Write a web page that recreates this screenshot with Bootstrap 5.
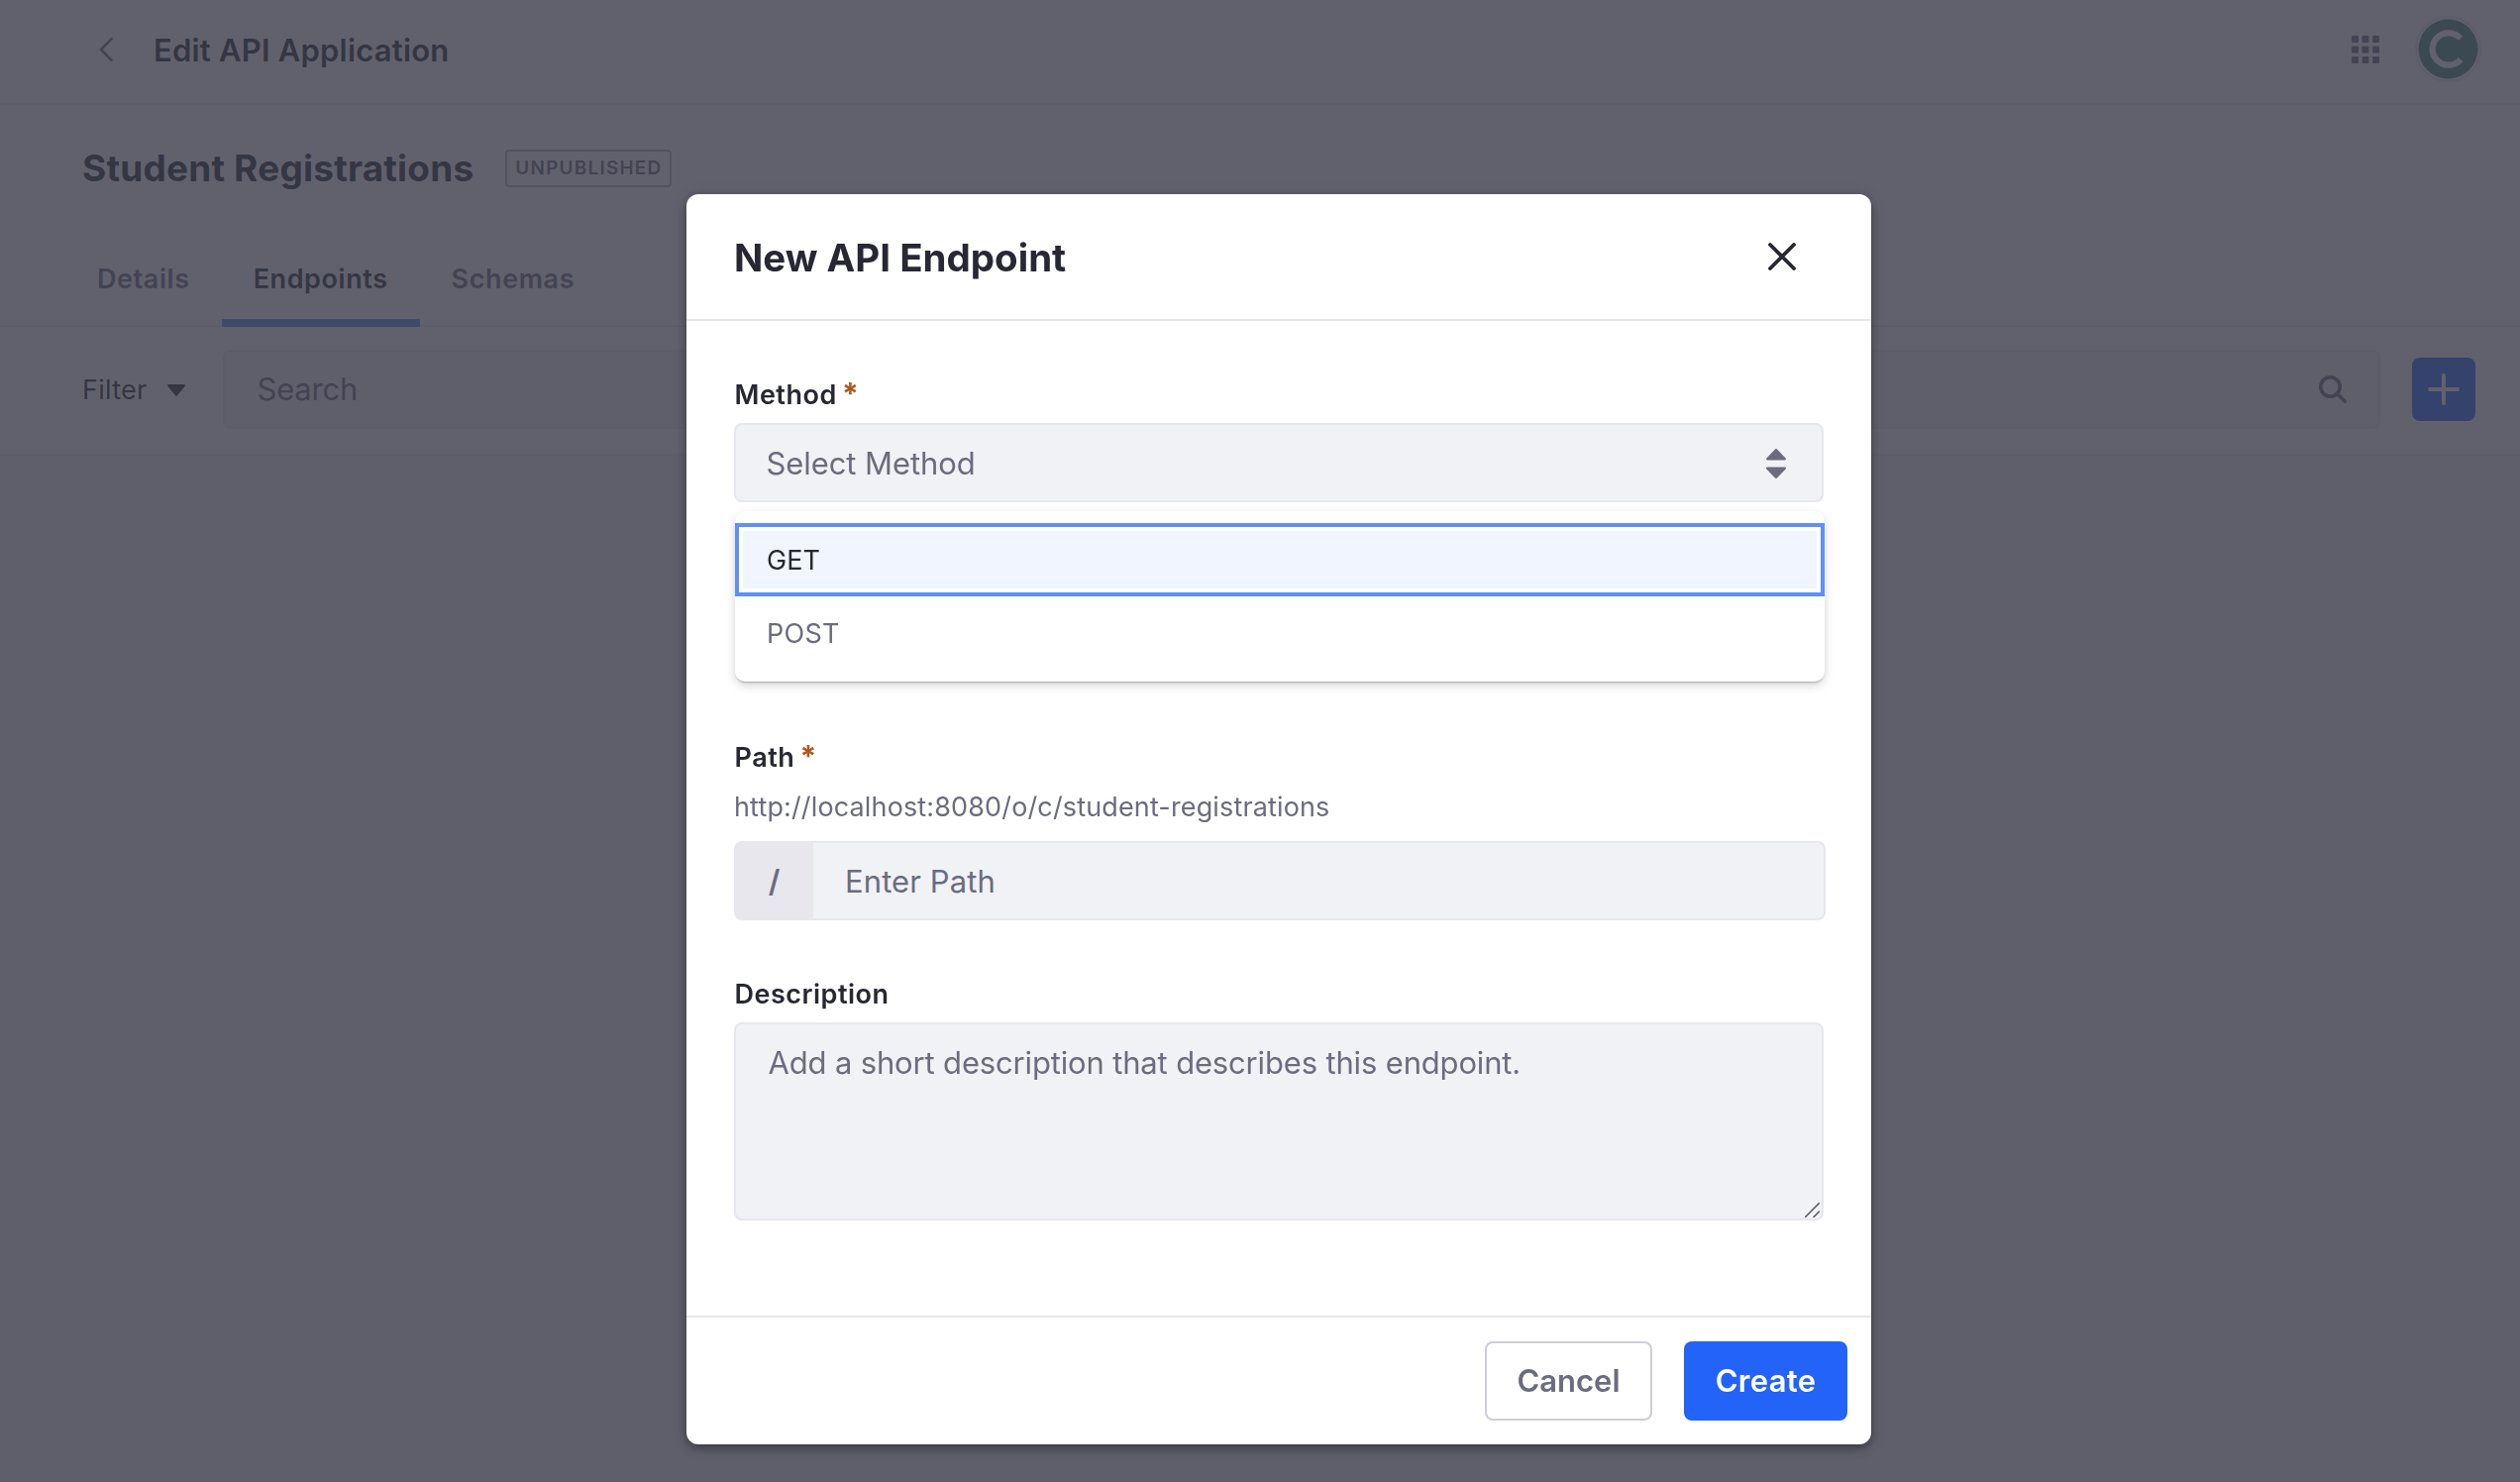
<!DOCTYPE html>
<html lang="en">
<head>
<meta charset="utf-8">
<meta name="viewport" content="width=device-width, initial-scale=1">
<title>Edit API Application</title>
<link href="https://cdn.jsdelivr.net/npm/bootstrap@5.3.0/dist/css/bootstrap.min.css" rel="stylesheet">
<style>
  :root { --ink: #272833; --muted: #6b6c7e; --line: #e7e7ed; --field: #f1f2f5; --blue: #2463f7; }
  body { font-family: Inter, "Liberation Sans", sans-serif; font-size: 27px; line-height: 40px; color: var(--ink); background: var(--field); height: 1496px; overflow: hidden; }
  svg { display: block; flex: none; }

  /* application page */
  .app-bar { height: 106px; padding: 0 39px 4px 100px; border-bottom: 2px solid var(--line); }
  .app-title { font-size: 31px; font-weight: 600; letter-spacing: .2px; margin-left: 40px; padding-top: 1px; }
  .avatar-ring { width: 67px; height: 67px; margin-left: 36px; margin-top: -2px; }
  .heading-bar { height: 128px; padding-left: 83px; }
  .heading-bar h1 { font-size: 37px; font-weight: 700; line-height: 48px; letter-spacing: .2px; }
  .status-tag { width: 168px; height: 38px; margin-left: 32px; padding-left: 8px; font-size: 19px; line-height: 34px; font-weight: 600; letter-spacing: 1.2px; color: var(--muted); border: 2px solid #b4b5c3; border-radius: 4px; }
  .tab-bar { height: 96px; padding-left: 66px; border-bottom: 2px solid var(--line); }
  .tab-bar .nav-link { height: 96px; padding: 28px 32px 0; font-weight: 600; letter-spacing: .58px; color: var(--muted); border-bottom: 8px solid transparent; }
  .tab-bar .nav-link.active { color: var(--ink); border-bottom-color: #5393f0; }
  .tool-bar { height: 130px; padding: 0 45px 2px 83px; border-bottom: 2px solid var(--line); }
  .filter-toggle { width: 142px; letter-spacing: .26px; padding-top: 1px; }
  .filter-toggle svg { margin-left: 21px; }
  .search-box { height: 80px; background: var(--field); border: 2px solid var(--line); border-radius: 8px; padding: 0 32px 0 32.5px; font-size: 31px; letter-spacing: -.21px; color: var(--muted); }
  .add-btn { width: 64px; height: 64px; margin-left: 32px; border-radius: 8px; background: var(--blue); }

  /* modal */
  .modal-backdrop { --bs-backdrop-bg: #3a3a49; --bs-backdrop-opacity: .8; }
  .modal-dialog { width: 1196px; max-width: none; margin: 196px 0 0 693px; }
  .modal-content { height: 1262px; border: 0; border-radius: 12px; color: var(--ink); box-shadow: 0 2px 10px -2px rgba(0,0,0,.3), 0 6px 10px 0 rgba(0,0,0,.16), 0 2px 16px 0 rgba(0,0,0,.12); }
  .modal-header { height: 128px; padding: 2px 76px 0 48px; border-bottom: 2px solid var(--line); }
  .modal-header svg { margin-top: -2px; }
  .modal-title { font-size: 38.5px; font-weight: 700; line-height: 48px; }
  .modal-body { padding: 54px 48px 0; }
  .modal-footer { height: 130px; padding: 24px; border-top: 2px solid var(--line); }
  .modal-footer > * { margin: 0; }
  .modal-footer .btn { height: 80px; font-size: 31px; font-weight: 600; border-width: 2px; border-radius: 8px; padding: 1px 0 0; }
  .btn-cancel { width: 169px; color: var(--muted); border-color: #cdced9; background: #fff; }
  .btn-create { width: 165px; margin-left: 32px; color: #fff; background: var(--blue); letter-spacing: .29px; }
  .field-label { display: block; height: 40px; margin-bottom: 9px; padding: 1px 0 0 .5px; font-weight: 600; letter-spacing: .5px; }
  .req { color: #b1561c; font-size: 30px; font-weight: 700; line-height: 1; margin-left: -2px; }
  .form-control, .input-group-text { height: 80px; border: 2px solid var(--line); border-radius: 8px; background: var(--field); font-size: 31px; line-height: 46px; color: var(--muted); }
  .form-control::placeholder { color: var(--muted); opacity: 1; }
  .select-box { width: 1100px; padding: 1px 36px 0 30.500px; letter-spacing: -.08px; }
  .dropdown-menu.show { width: 1100px; height: 172px; left: 1px; top: 9px; padding: 12px 0; border: 0; border-radius: 10px; font-size: 27px; box-shadow: 0 2px 2px -1px rgba(39,40,51,.28), 0 4px 10px rgba(39,40,51,.2); }
  .dropdown-item { height: 74px; padding: 1px 32px 0; line-height: 74px; color: var(--muted); letter-spacing: .3px; }
  .dropdown-item.active { color: var(--ink); background: #f0f5ff; box-shadow: inset 0 0 0 4px #5f90f8, inset 0 0 0 8px #fff; letter-spacing: .1px; }
  .path-field { margin-top: 237px; }
  .base-url { height: 40px; margin: 10px 0 15px; padding-top: 1px; color: var(--muted); letter-spacing: .14px; }
  .input-group { width: 1102px; }
  .input-group-text { width: 81px; background: var(--line); font-weight: 600; padding-top: 8px; }
  .path-input { padding: 0 32px; border-left: 0; letter-spacing: .1px; }
  .desc-field { margin-top: 54px; }
  textarea.form-control { width: 1100px; height: 200px; padding: 16px 32.5px; letter-spacing: -.16px; resize: none; }
  .grip { right: 4px; bottom: 3px; }
</style>
<script src="https://cdn.jsdelivr.net/npm/bootstrap@5.3.0/dist/js/bootstrap.bundle.min.js"></script>
</head>
<body>

<div class="bg-white">
  <header class="app-bar d-flex align-items-center">
    <svg width="15" height="26" viewBox="0 0 15 26" fill="none" stroke="#6b6c7e" stroke-width="2.6" stroke-linecap="round" stroke-linejoin="round"><path d="M12.5 2.2 2 13l10.500 10.800"/></svg>
    <div class="app-title">Edit API Application</div>
    <svg class="ms-auto" width="28" height="28" viewBox="0 0 28 28" fill="#6b6c7e"><g id="r"><rect width="7" height="7" rx="1"/><rect x="10.500" width="7" height="7" rx="1"/><rect x="21" width="7" height="7" rx="1"/></g><use href="#r" y="10.500"/><use href="#r" y="21"/></svg>
    <svg class="avatar-ring" viewBox="0 0 67 67"><circle cx="33.500" cy="33.500" r="32.500" fill="#fff" stroke="#e7e7ed" stroke-width="2"/><circle cx="33.500" cy="33.500" r="30" fill="#44867f"/><path d="M46 22.800A16.200 16.200 0 1 0 46.200 44" fill="none" stroke="#fff" stroke-width="6.200"/></svg>
  </header>

  <div class="heading-bar d-flex align-items-center">
    <h1 class="m-0">Student Registrations</h1>
    <span class="status-tag">UNPUBLISHED</span>
  </div>

  <nav class="tab-bar nav flex-nowrap">
    <a class="nav-link" href="#">Details</a>
    <a class="nav-link active" href="#">Endpoints</a>
    <a class="nav-link" href="#">Schemas</a>
  </nav>

  <div class="tool-bar d-flex align-items-center">
    <div class="filter-toggle d-flex align-items-center">Filter
      <svg width="18" height="12" viewBox="0 0 18 12" fill="#272833"><path d="M1.300 0h15.400c1.200 0 1.600 1.200.9 2L10 11.200a1.300 1.300 0 0 1-2 0L.4 2C-.3 1.200.1 0 1.300 0z"/></svg>
    </div>
    <div class="search-box d-flex align-items-center justify-content-between flex-fill">Search
      <svg width="28" height="28" viewBox="0 0 28 28" fill="none" stroke="#6b6c7e" stroke-linecap="round"><circle cx="11.500" cy="11.500" r="9.700" stroke-width="3.600"/><path d="m19 19 7.200 7.200" stroke-width="3.600"/></svg>
    </div>
    <button class="btn add-btn d-flex align-items-center justify-content-center p-0 border-0" type="button" aria-label="Add">
      <svg width="32" height="32" viewBox="0 0 32 32" stroke="#fff" stroke-width="4" stroke-linecap="round"><path d="M16 2v28M2 16h28"/></svg>
    </button>
  </div>
</div>

<div class="modal-backdrop show"></div>

<div class="modal d-block overflow-hidden" tabindex="-1">
  <div class="modal-dialog">
    <div class="modal-content">
      <div class="modal-header">
        <div class="modal-title">New API Endpoint</div>
        <svg width="28" height="28" viewBox="0 0 28 28" stroke="#272833" stroke-width="3.800" stroke-linecap="round"><path d="M2 2l24 24M26 2 2 26"/></svg>
      </div>

      <div class="modal-body">
        <div>
          <label class="field-label">Method <span class="req">*</span></label>
          <div class="form-control select-box d-flex align-items-center justify-content-between">Select Method
            <svg width="20" height="30" viewBox="0 0 20 30" fill="#6b6c7e"><path d="M9 .5a1.400 1.400 0 0 1 2 0l8.600 8.900c.8.900.3 2-.8 2H1.200c-1.100 0-1.600-1.100-.8-2zM9 29.500a1.400 1.400 0 0 0 2 0l8.600-8.900c.8-.9.3-2-.8-2H1.200c-1.100 0-1.600 1.100-.8 2z"/></svg>
          </div>
          <div class="position-relative">
            <div class="dropdown-menu show">
              <a class="dropdown-item active" href="#">GET</a>
              <a class="dropdown-item" href="#">POST</a>
            </div>
          </div>
        </div>

        <div class="path-field">
          <label class="field-label mb-0">Path <span class="req">*</span></label>
          <div class="base-url">http://localhost:8080/o/c/student-registrations</div>
          <div class="input-group flex-nowrap">
            <span class="input-group-text justify-content-center">/</span>
            <input class="form-control path-input" type="text" placeholder="Enter Path">
          </div>
        </div>

        <div class="desc-field">
          <label class="field-label">Description</label>
          <div class="position-relative d-inline-block">
            <textarea class="form-control" placeholder="Add a short description that describes this endpoint."></textarea>
            <svg class="grip position-absolute" width="15" height="15" viewBox="0 0 15 15" stroke="#55565c" stroke-width="1.500"><path d="M0 15 15 0M8.500 15 15 8.500"/></svg>
          </div>
        </div>
      </div>

      <div class="modal-footer justify-content-end">
        <button class="btn btn-cancel" type="button">Cancel</button>
        <button class="btn btn-create" type="button">Create</button>
      </div>
    </div>
  </div>
</div>

</body>
</html>
